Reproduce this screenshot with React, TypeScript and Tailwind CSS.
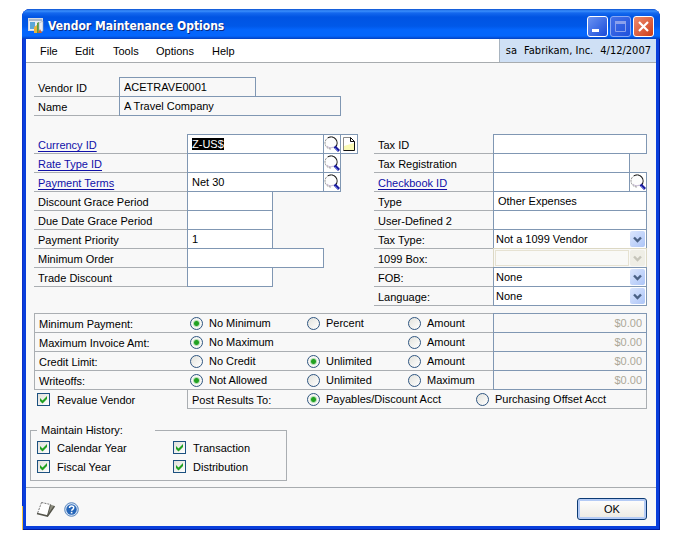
import { useEffect, useRef } from "react";
import type { ReactNode } from "react";

function AppIcon() {
  return (
    <svg width="16" height="16" viewBox="0 0 16 16" aria-hidden="true">
      <rect x="0.5" y="0.5" width="14" height="12" fill="#e9eef5" stroke="#d5dae2" />
      <rect x="1" y="1" width="13" height="2" fill="#a9b9cc" />
      <rect x="2" y="4" width="5" height="7" fill="#5aa7d8" />
      <path d="M6 15V9l3-2v8z" fill="#e8b33c" />
      <path d="M9 15V5l2-1v11z" fill="#5b9c3c" />
      <path d="M11 14V5l4-2v10z" fill="#e9edf2" stroke="#9aa6b5" strokeWidth="0.6" />
      <path d="M10 15l2-4 2 4z" fill="#d4622a" />
    </svg>
  );
}

function Magnifier() {
  return (
    <svg width="16" height="16" viewBox="0 0 16 16" aria-hidden="true">
      <circle cx="7" cy="7" r="6" fill="#fdfdfd" />
      <path d="M10 1.800A6 6 0 1 0 7 13" fill="none" stroke="#8c8c8c" strokeWidth="1" strokeDasharray="2 0.800" />
      <path d="M4 1.800A6 6 0 0 1 11.500 11" fill="none" stroke="#1a1a1a" strokeWidth="1.100" />
      <path d="M3 10c1.500 2 4.500 2.200 6.500 1" fill="none" stroke="#b5a5c5" strokeWidth="0.800" />
      <path d="M10.500 10.500l4.500 4.500" stroke="#1c1c9c" strokeWidth="2.800" />
      <path d="M11 12l3 3" stroke="#5a6ae0" strokeWidth="1" />
    </svg>
  );
}

function PageIcon() {
  return (
    <svg width="16" height="16" viewBox="0 0 16 16" aria-hidden="true">
      <path d="M2.500 1.500h7l4 4v9h-11z" fill="#fff" />
      <path d="M3 10l10-3v7H3z" fill="#fafab4" />
      <path d="M2.500 14.500v-13h7" fill="none" stroke="#8a8a8a" />
      <path d="M9.500 1.500v4h4l-4-4M13.500 5.500v9h-11" fill="none" stroke="#111" />
    </svg>
  );
}

function NoteIcon() {
  return (
    <svg width="20" height="17" viewBox="0 0 20 17" aria-hidden="true">
      <path d="M5.500 1.500l9 2-3 11-10-2z" fill="#fff" />
      <path d="M14.500 3.500l4 1.500-6 9.500h-1z" fill="#8e8e80" />
      <path d="M5.500 1.500l9 2M5.500 1.500l-4 11" fill="none" stroke="#777" strokeDasharray="2 1" />
      <path d="M1 12.500l10.500 2.600 7-10" fill="none" stroke="#55554c" strokeWidth="1.500" />
      <path d="M14.500 3.500l-3 11" stroke="#55554c" />
    </svg>
  );
}

function HelpIcon() {
  return (
    <svg width="15" height="15" viewBox="0 0 15 15" aria-hidden="true">
      <circle cx="7.500" cy="7.500" r="6.800" fill="#d4e2f4" stroke="#5a86bd" strokeWidth="1" />
      <circle cx="7.500" cy="7.500" r="5.200" fill="#2465b8" />
      <path d="M5.500 6c0-2.600 4.200-2.600 4.200-.2 0 1.500-2.100 1.500-2.100 3" fill="none" stroke="#fff" strokeWidth="1.500" />
      <rect x="6.800" y="9.800" width="1.600" height="1.600" fill="#fff" />
    </svg>
  );
}

const labelBase = "flex h-[19px] shrink-0 items-center border-b border-[#aaaeb2] px-1 pt-0.5 whitespace-nowrap";
const fieldBase = "-mt-px h-5 min-w-0 rounded-none border border-[#8097b3] px-1 outline-none";

type RowProps = {
  id: string;
  label: string;
  link?: boolean;
  labelWidth: string;
  children: ReactNode;
};

function Row({ id, label, link, labelWidth, children }: RowProps) {
  return (
    <div className="flex h-[19px]">
      <div className={labelBase + " " + labelWidth}>
        {link ? (
          <a href={"#" + id} className="text-[#1010a8] underline underline-offset-2">
            <label htmlFor={id}>{label}</label>
          </a>
        ) : (
          <label htmlFor={id}>{label}</label>
        )}
      </div>
      {children}
    </div>
  );
}

function LookupButton({ name, page }: { name: string; page?: boolean }) {
  return (
    <button
      type="button"
      aria-label={name}
      className="-mt-px -ml-px flex h-5 w-[18px] shrink-0 items-center justify-center border border-[#8097b3] bg-white"
    >
      {page ? <PageIcon /> : <Magnifier />}
    </button>
  );
}

function DropDown({ id, value, disabled }: { id: string; value: string; disabled?: boolean }) {
  return (
    <div className="relative -mt-px h-5 min-w-0 flex-1">
      <select
        id={id}
        disabled={disabled}
        defaultValue={value}
        className="block h-5 w-full appearance-none rounded-none border border-[#8097b3] bg-white pr-5 pl-0.5 outline-none disabled:border-[#dcd8c4] disabled:bg-[#f9f9f7] disabled:opacity-100"
      >
        <option>{value}</option>
      </select>
      {disabled && (
        <span className="pointer-events-none absolute inset-y-0.5 right-[18px] left-0.5 border border-[#e6e2d2]" />
      )}
      <span
        className={
          "pointer-events-none absolute top-0.5 right-0.5 flex h-4 w-[15px] items-center justify-center rounded-xs " +
          (disabled ? "bg-[#efeee6]" : "bg-linear-to-br from-[#dbe6fd] to-[#adc5f7]")
        }
      >
        <svg width="9" height="7" viewBox="0 0 9 7" aria-hidden="true">
          <path d="M1 1.500l3.500 3.500 3.500-3.500" fill="none" stroke={disabled ? "#c6c5ba" : "#4a6185"} strokeWidth="2.400" />
        </svg>
      </span>
    </div>
  );
}

type ChoiceProps = { name: string; label: string; checked?: boolean; width: string };

function Radio({ name, label, checked, width }: ChoiceProps) {
  return (
    <label className={"flex h-[18px] shrink-0 items-center gap-1.5 whitespace-nowrap " + width}>
      <input
        type="radio"
        name={name}
        defaultChecked={checked}
        className="size-[13px] shrink-0 appearance-none rounded-full border border-[#2f5580] bg-linear-to-br from-[#e2e2dc] to-white checked:bg-[radial-gradient(circle,#21a121_0_2px,#b5deb5_3px,#f6f6f3_4px)]"
      />
      {label}
    </label>
  );
}

function CheckBox({ label, width }: { label: string; width: string }) {
  return (
    <label className={"flex h-[19px] items-center gap-[7px] whitespace-nowrap " + width}>
      <span className="relative size-[13px] shrink-0">
        <input
          type="checkbox"
          defaultChecked
          className="peer block size-[13px] appearance-none border border-[#1c5180] bg-linear-to-br from-[#e0e0da] to-white"
        />
        <svg
          className="pointer-events-none absolute inset-0 hidden peer-checked:block"
          width="13"
          height="13"
          viewBox="0 0 13 13"
          aria-hidden="true"
        >
          <path d="M3 5v3l2.500 2.500L10 6V3L5.500 7.500z" fill="#21a121" />
        </svg>
      </span>
      {label}
    </label>
  );
}

const leftLabel = "w-[153px]";
const rightLabel = "w-[119px]";

const limits = [
  { label: "Minimum Payment:", options: ["No Minimum", "Percent", "Amount"], picked: 0 },
  { label: "Maximum Invoice Amt:", options: ["No Maximum", "", "Amount"], picked: 0 },
  { label: "Credit Limit:", options: ["No Credit", "Unlimited", "Amount"], picked: 1 },
  { label: "Writeoffs:", options: ["Not Allowed", "Unlimited", "Maximum"], picked: 0 },
];
const optionWidths = ["w-[117px]", "w-[101px]", "w-[85px]"];

export default function App() {
  const currency = useRef<HTMLInputElement>(null);
  useEffect(() => {
    currency.current?.focus();
    currency.current?.select();
  }, []);

  return (
    <div className="bg-white pt-[9px] pr-5 pb-[9px] pl-[22px] font-['Liberation_Sans',Arial,sans-serif] text-[11px] leading-4 text-black">
      <main className="relative rounded-t-lg bg-[#0a3fdc] shadow-[inset_-1px_-1px_0_#001ca0,inset_1px_0_0_#0a2fc8]">
        <span className="absolute bottom-0 left-0 h-6 w-px bg-[#f5c542]" />
        <header className="flex h-[30px] items-center gap-1 rounded-t-lg bg-[linear-gradient(180deg,#0a50d0_0,#3a8ffc_2px,#1468ee_4px,#0054e3_8px,#0058e8_17px,#0466fc_21px,#0466fc_27px,#0340c0_30px)] pt-1 pr-1.5 pl-1.5">
          <AppIcon />
          <h1 className="flex-1 font-['DejaVu_Sans_Condensed','DejaVu_Sans',sans-serif] text-[12px] font-bold whitespace-nowrap text-white [text-shadow:1px_1px_0_#0a2a80]">
            Vendor Maintenance Options
          </h1>
          <div className="flex gap-0.5">
            <button type="button" aria-label="Minimize" className="size-[21px] rounded-[3px] border border-white bg-linear-to-br from-[#6b93f2] to-[#1a48d8]">
              <svg width="19" height="19" viewBox="0 0 19 19" aria-hidden="true">
                <rect x="4" y="12" width="7" height="3" fill="#fff" />
              </svg>
            </button>
            <button type="button" aria-label="Maximize" disabled className="size-[21px] rounded-[3px] border border-[#8ba9f4] bg-linear-to-br from-[#4470e8] to-[#2050dc]">
              <svg width="19" height="19" viewBox="0 0 19 19" aria-hidden="true">
                <path d="M4.500 5v9.500h10V5" fill="none" stroke="#8ba0ec" />
                <rect x="4" y="4" width="11" height="3" fill="#8ba0ec" />
              </svg>
            </button>
            <button type="button" aria-label="Close" className="size-[21px] rounded-[3px] border border-white bg-linear-to-br from-[#ee8a6c] to-[#cc3a10]">
              <svg width="19" height="19" viewBox="0 0 19 19" aria-hidden="true">
                <path d="M5 5l9 9M14 5l-9 9" stroke="#fff" strokeWidth="2.200" />
              </svg>
            </button>
          </div>
        </header>

        <div className="mx-1 bg-[#f8f8f8]">
          <nav className="flex h-6 items-stretch border-b border-[#a8acaf] bg-white">
            <div className="flex flex-1 items-center pl-3.5">
              <button type="button" className="w-[35px] text-left">File</button>
              <button type="button" className="w-[38px] text-left">Edit</button>
              <button type="button" className="w-[43px] text-left">Tools</button>
              <button type="button" className="w-14 text-left">Options</button>
              <button type="button" className="text-left">Help</button>
            </div>
            <div className="flex items-center gap-[7px] border-l border-[#a8b4c0] bg-[#cfe0f5] pr-[5px] pl-1.5 font-['DejaVu_Sans_Condensed','DejaVu_Sans',sans-serif] whitespace-nowrap">
              <span>sa</span>
              <span>Fabrikam, Inc.</span>
              <span>4/12/2007</span>
            </div>
          </nav>

          <form className="pt-[15px] pr-[9px] pb-1.5 pl-2" onSubmit={(e) => e.preventDefault()}>
            <section className="mb-[19px]">
              <Row id="vendor" label="Vendor ID" labelWidth="w-[85px]">
                <input id="vendor" readOnly defaultValue="ACETRAVE0001" className={fieldBase + " w-[137px]"} />
              </Row>
              <Row id="name" label="Name" labelWidth="w-[85px]">
                <input id="name" readOnly defaultValue="A Travel Company" className={fieldBase + " w-[222px]"} />
              </Row>
            </section>

            <section className="mb-[7px] flex gap-4">
              <div className="w-[324px] shrink-0">
                <Row id="currency" label="Currency ID" link labelWidth={leftLabel}>
                  <input
                    id="currency"
                    ref={currency}
                    defaultValue="Z-US$"
                    className={fieldBase + " w-[137px] bg-white selection:bg-black selection:text-white"}
                  />
                  <LookupButton name="Look up currency" />
                  <LookupButton name="Currency details" page />
                </Row>
                <Row id="rate" label="Rate Type ID" link labelWidth={leftLabel}>
                  <input id="rate" className={fieldBase + " w-[137px] bg-white"} />
                  <LookupButton name="Look up rate type" />
                </Row>
                <Row id="terms" label="Payment Terms" link labelWidth={leftLabel}>
                  <input id="terms" defaultValue="Net 30" className={fieldBase + " w-[137px] bg-white"} />
                  <LookupButton name="Look up payment terms" />
                </Row>
                <Row id="discount-grace" label="Discount Grace Period" labelWidth={leftLabel}>
                  <input id="discount-grace" className={fieldBase + " w-[86px] bg-white"} />
                </Row>
                <Row id="due-grace" label="Due Date Grace Period" labelWidth={leftLabel}>
                  <input id="due-grace" className={fieldBase + " w-[86px] bg-white"} />
                </Row>
                <Row id="priority" label="Payment Priority" labelWidth={leftLabel}>
                  <input id="priority" defaultValue="1" className={fieldBase + " w-[86px] bg-white"} />
                </Row>
                <Row id="min-order" label="Minimum Order" labelWidth={leftLabel}>
                  <input id="min-order" className={fieldBase + " w-[137px] bg-white"} />
                </Row>
                <Row id="trade" label="Trade Discount" labelWidth={leftLabel}>
                  <input id="trade" className={fieldBase + " w-[86px] bg-white"} />
                </Row>
              </div>

              <div className="min-w-0 flex-1">
                <Row id="tax-id" label="Tax ID" labelWidth={rightLabel}>
                  <input id="tax-id" className={fieldBase + " flex-1 bg-white"} />
                </Row>
                <Row id="tax-reg" label="Tax Registration" labelWidth={rightLabel}>
                  <input id="tax-reg" className={fieldBase + " mr-[17px] flex-1 bg-white"} />
                </Row>
                <Row id="checkbook" label="Checkbook ID" link labelWidth={rightLabel}>
                  <input id="checkbook" className={fieldBase + " flex-1 bg-white"} />
                  <LookupButton name="Look up checkbook" />
                </Row>
                <Row id="type" label="Type" labelWidth={rightLabel}>
                  <input id="type" defaultValue="Other Expenses" className={fieldBase + " flex-1 bg-white"} />
                </Row>
                <Row id="user2" label="User-Defined 2" labelWidth={rightLabel}>
                  <input id="user2" className={fieldBase + " flex-1 bg-white"} />
                </Row>
                <Row id="tax-type" label="Tax Type:" labelWidth={rightLabel}>
                  <DropDown id="tax-type" value="Not a 1099 Vendor" />
                </Row>
                <Row id="box-1099" label="1099 Box:" labelWidth={rightLabel}>
                  <DropDown id="box-1099" value="" disabled />
                </Row>
                <Row id="fob" label="FOB:" labelWidth={rightLabel}>
                  <DropDown id="fob" value="None" />
                </Row>
                <Row id="language" label="Language:" labelWidth={rightLabel}>
                  <DropDown id="language" value="None" />
                </Row>
              </div>
            </section>

            <section className="border-t border-[#aaaeb2]">
              {limits.map((row) => (
                <div
                  key={row.label}
                  role="radiogroup"
                  aria-label={row.label}
                  className="flex h-[19px] border-b border-l border-[#aaaeb2]"
                >
                  <span className="w-[155px] shrink-0 pt-0.5 pl-1">{row.label}</span>
                  {row.options.map((option, i) =>
                    option ? (
                      <Radio key={i} name={row.label} label={option} checked={i === row.picked} width={optionWidths[i]} />
                    ) : (
                      <span key={i} className={optionWidths[i]} />
                    ),
                  )}
                  <input
                    aria-label={row.label + " amount"}
                    disabled
                    defaultValue="$0.00"
                    className={fieldBase + " flex-1 text-right text-[#aca899]"}
                  />
                </div>
              ))}
              <div className="flex h-[19px]">
                <CheckBox label="Revalue Vendor" width="w-[153px] pl-[3px]" />
                <div
                  role="radiogroup"
                  aria-label="Post Results To"
                  className="flex h-[19px] flex-1 border-x border-b border-[#aaaeb2]"
                >
                  <span className="w-[119px] shrink-0 pt-0.5 pl-1 whitespace-nowrap">Post Results To:</span>
                  <Radio name="post" label="Payables/Discount Acct" checked width="w-[169px]" />
                  <Radio name="post" label="Purchasing Offset Acct" width="" />
                </div>
              </div>
            </section>

            <fieldset className="mt-[13px] -ml-1 h-[59px] w-[257px] border border-[#aaaeb2] pl-1.5">
              <legend className="w-[118px] pl-1">Maintain History:</legend>
              <div className="flex flex-wrap">
                <CheckBox label="Calendar Year" width="w-[136px]" />
                <CheckBox label="Transaction" width="w-[110px]" />
                <CheckBox label="Fiscal Year" width="w-[136px]" />
                <CheckBox label="Distribution" width="w-[110px]" />
              </div>
            </fieldset>
          </form>

          <footer className="flex h-[39px] items-center gap-2 border-t border-[#a8acaf] pt-1 pr-[9px] pl-2.5">
            <button type="button" aria-label="Note">
              <NoteIcon />
            </button>
            <button type="button" aria-label="Help">
              <HelpIcon />
            </button>
            <button
              type="button"
              className="ml-auto h-[22px] w-[70px] rounded-[3px] border border-[#0c3a74] bg-linear-to-b from-white to-[#eceae2] shadow-[inset_0_0_0_2px_#b4cbf5]"
            >
              OK
            </button>
          </footer>
        </div>
        <div className="h-1" />
      </main>
    </div>
  );
}
